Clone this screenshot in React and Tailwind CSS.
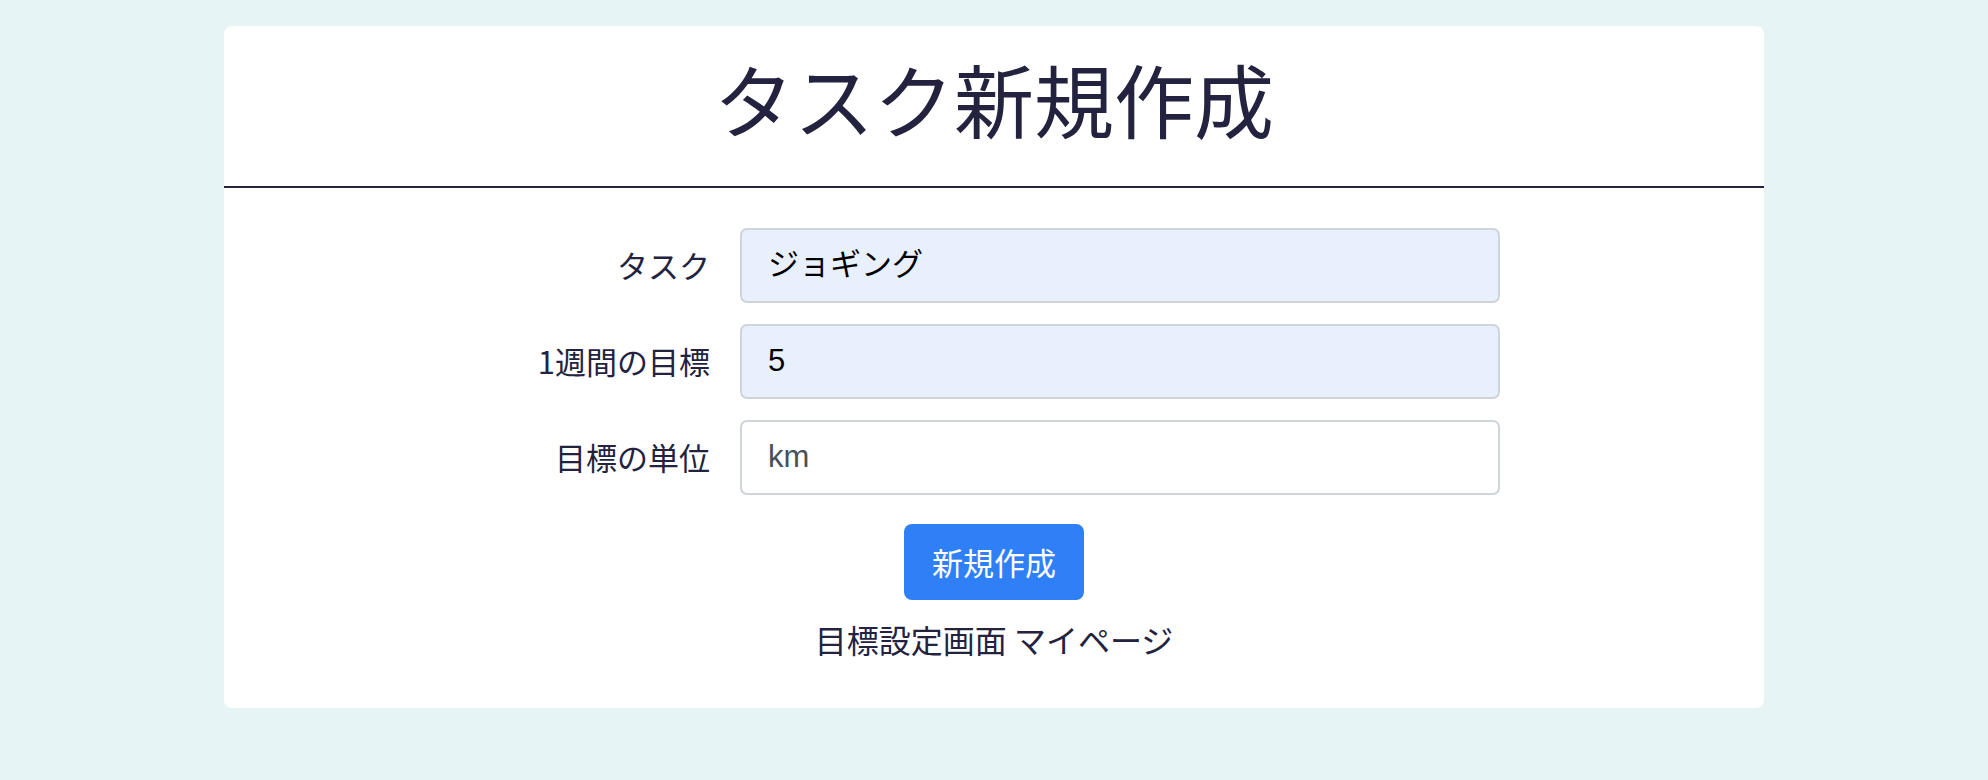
import React from "react";

const jp = "font-['Noto_Sans_CJK_JP',sans-serif]";
const inputFont = "font-['Liberation_Sans','Noto_Sans_CJK_JP',sans-serif]";

const Field = ({ label, value, filled, muted }) => (
  <div className="flex items-center">
    <label className={`w-[222px] shrink-0 text-right text-[31px] text-[#23233f] ${jp}`}>
      {label}
    </label>
    <div
      className={`ml-[30px] flex h-[75px] flex-1 items-center rounded-[7px] border-2 border-[#ced4da] pl-[26px] text-[31px] ${inputFont} ${
        filled ? "bg-[#e8f0fe]" : "bg-white"
      } ${muted ? "text-[#495057]" : "text-black"}`}
    >
      {value}
    </div>
  </div>
);

const App = () => {
  return (
    <div className="min-h-[780px] w-full bg-[#e6f4f5] pt-[26px]">
      <div className="mx-auto flex h-[682px] w-[1540px] flex-col rounded-[8px] bg-white">
        <div className="h-[162px] border-b-2 border-[#23233f] pt-[23px] text-center">
          <h1 className={`text-[80px] leading-[96px] text-[#23233f] ${jp}`}>
            タスク新規作成
          </h1>
        </div>

        <form className="mx-auto mt-[40px] flex w-[1012px] flex-col gap-[21px]">
          <Field label="タスク" value="ジョギング" filled />
          <Field label="1週間の目標" value="5" filled />
          <Field label="目標の単位" value="km" muted />
        </form>

        <div className="mt-[29px] flex justify-center">
          <button
            type="button"
            className={`h-[76px] w-[180px] rounded-[8px] bg-[#2f80f7] text-[31px] text-white ${jp}`}
          >
            新規作成
          </button>
        </div>

        <div className={`mt-[17px] text-center text-[32px] leading-[45px] text-[#23233f] ${jp}`}>
          <a href="#">目標設定画面</a> <a href="#">マイページ</a>
        </div>
      </div>
    </div>
  );
};

export default App;
